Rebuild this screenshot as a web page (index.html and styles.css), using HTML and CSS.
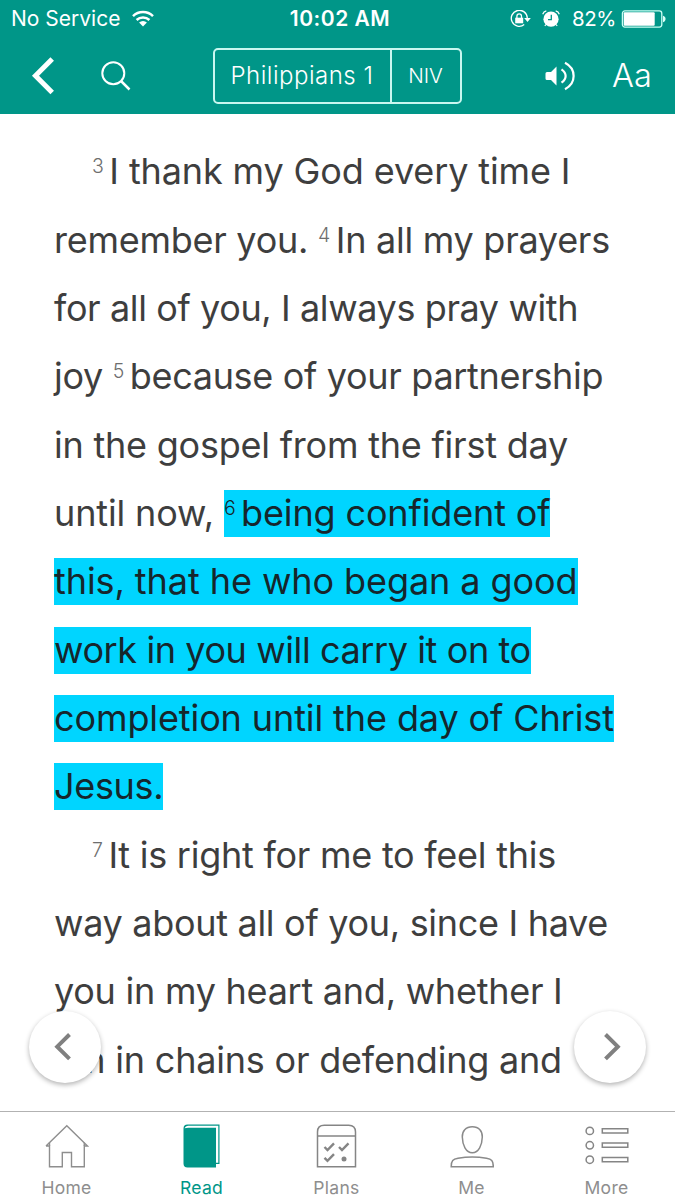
FILE: index.html
```html
<!DOCTYPE html>
<html lang="en">
<head>
<meta charset="utf-8">
<title>Philippians 1</title>
<link rel="stylesheet" href="styles.css">
</head>
<body>
<div class="app">
  <header class="header">
    <div class="status">
      <div class="status-left">
        <span class="carrier">No Service</span>
        <svg class="wifi" width="22" height="17" viewBox="0 0 22 17" fill="none" stroke="#fff" stroke-width="2.5">
          <path d="M1 6.2a14.3 14.3 0 0 1 20 0"/><path d="M4.6 10a9.3 9.3 0 0 1 12.8 0"/><path d="M11 16.4l-3.9-3.9a5.6 5.6 0 0 1 7.8 0z" fill="#fff" stroke="none"/>
        </svg>
      </div>
      <div class="clock">10:02 AM</div>
      <div class="status-right">
        <svg width="21" height="18" viewBox="0 0 21 18" fill="none" stroke="#fff" stroke-width="1.3">
          <path d="M14.2 14.6A8 8 0 1 1 17.3 8"/><path d="M14.2 8h6.6l-3.3 4z" fill="#fff" stroke="none"/>
          <path d="M5.2 7.7h8v5.6h-8z" fill="#fff" stroke="none"/><path d="M6.9 8V6.2a2.3 2.3 0 0 1 4.6 0V8"/>
        </svg>
        <svg class="alarm" width="18" height="18" viewBox="0 0 18 18" fill="none" stroke="#fff" stroke-width="1.2">
          <circle cx="9" cy="9.2" r="7.6" fill="#fff" stroke="none"/><path d="M.7 4.2A5 5 0 0 1 4.300.9M17.300 4.200a5 5 0 0 0-3.600-3.300M4 14.500l-1.200 1.500M14 14.500l1.200 1.500"/><path d="M9.300 4.800v4.800H6" stroke="#009688" stroke-width="1.3"/>
        </svg>
        <span class="percent">82%</span>
        <svg width="45" height="18" viewBox="0 0 45 18" fill="none">
          <rect x="1.400" y=".9" width="39.400" height="16.200" rx="2.500" stroke="#c9fff4" stroke-width="1.300"/><rect x="2.700" y="2.200" width="31" height="13.600" rx="1" fill="#fff"/><path d="M42 5.800c3.400.5 3.400 5.900 0 6.400z" fill="#d9fff8"/>
        </svg>
      </div>
    </div>
    <nav class="toolbar">
      <svg class="back" width="24" height="40" viewBox="0 0 24 40" fill="none" stroke="#fff" stroke-width="5"><path d="M21.200 3L4.500 19.700l16.700 16.700"/></svg>
      <svg class="search" width="30" height="30" viewBox="0 0 30 30" fill="none" stroke="#fff" stroke-width="2"><circle cx="12.300" cy="12.300" r="11"/><path d="M20 20l8.500 8.500" stroke-width="2.500"/></svg>
      <div class="picker"><span class="book">Philippians 1</span><span class="version">NIV</span></div>
      <svg class="sound" width="32" height="30" viewBox="0 0 32 30" fill="none" stroke="#fff" stroke-width="2.200">
        <path d="M2 11h4l5.500-5.500v19L6 19H2a1.500 1.500 0 0 1-1.500-1.500v-5A1.500 1.500 0 0 1 2 11z" fill="#fff" stroke="none"/><path d="M16.500 8.300c5.500 3.800 5.500 9.600 0 13.400"/><path d="M20 1.800c11.500 6 11.500 20.400 0 26.400"/>
      </svg>
      <span class="type">Aa</span>
    </nav>
  </header>
  <main class="reader">
    <p class="verse">
      <span class="line indent l1"><sup>3</sup>I thank my God every time I</span>
      <span class="line l2">remember you. <sup>4</sup>In all my prayers</span>
      <span class="line l3">for all of you, I always pray with</span>
      <span class="line l4">joy <sup>5</sup>because of your partnership</span>
      <span class="line l5">in the gospel from the first day</span>
      <span class="line l6">until now, <mark><sup>6</sup>being confident of</mark></span>
      <span class="line l7"><mark>this, that he who began a good</mark></span>
      <span class="line l8"><mark>work in you will carry it on to</mark></span>
      <span class="line l9"><mark>completion until the day of Christ</mark></span>
      <span class="line l10"><mark>Jesus.</mark></span>
    </p>
    <p class="verse">
      <span class="line indent l11"><sup>7</sup>It is right for me to feel this</span>
      <span class="line l12">way about all of you, since I have</span>
      <span class="line l13">you in my heart and, whether I</span>
      <span class="line l14">am in chains or defending and</span>
    </p>
    <div class="round prev"><svg width="18" height="28" viewBox="0 0 18 28" fill="none" stroke="#808080" stroke-width="4"><path d="M15.500 1.500L3.200 13.700l12.300 12.200"/></svg></div>
    <div class="round next"><svg width="18" height="28" viewBox="0 0 18 28" fill="none" stroke="#808080" stroke-width="4"><path d="M2.500 1.500L14.800 13.700 2.500 25.900"/></svg></div>
  </main>
  <footer class="tabs">
    <div class="tab"><svg width="44" height="46" viewBox="0 0 44 46" fill="none" stroke="#8e8e8e" stroke-width="1.400"><path d="M1 22L21.800 1.700 42.500 22h-3.200v20.800H26.500V28.500H17.300v14.300H4.500V22H1"/><path d="M4.500 22v-3.500M39.300 22v-3.500"/></svg><span>Home</span></div>
    <div class="tab active"><svg width="44" height="46" viewBox="0 0 44 46"><path d="M7.500 .5h32v39.500h-3.500V43.500H7.500a4 4 0 0 1-4-4V4.500a4 4 0 0 1 4-4z" fill="#009688"/><path d="M4.500 4.300Q5.500 1.700 8 1.700h30.300v37.100h-2.300V3.700H8.500Q6 3.700 4.500 4.300z" fill="#fff"/></svg><span>Read</span></div>
    <div class="tab"><svg width="44" height="46" viewBox="0 0 44 46" fill="none" stroke="#858585" stroke-width="1.500"><path d="M2.500 42.800V8q0-6.800 6.800-6.800h24.400q6.800 0 6.800 6.800v34.800zM2.500 12h38"/><path d="M9.500 23l3 3 6.500-6.600M24 23l3 3 6.500-6.600M9.500 33.800l3 3 6.500-6.600" stroke-width="2.400"/><circle cx="29" cy="34.900" r="2.500" fill="#858585" stroke="none"/></svg><span>Plans</span></div>
    <div class="tab"><svg width="44" height="46" viewBox="0 0 44 46" fill="none" stroke="#8a8a8a" stroke-width="1.500"><path d="M22.300 2.800c6.700 0 10.200 4.500 10 10.200-.2 8-3.500 15.700-10 15.700S12.500 21 12.300 13c-.2-5.700 3.300-10.200 10-10.200z"/><path d="M1.200 42.800C1.200 36.500 3 35.200 8 34.300c9-1.500 19.500-1.500 28.500 0 5 .9 6.800 2.200 6.800 8.500z"/></svg><span>Me</span></div>
    <div class="tab"><svg width="44" height="46" viewBox="0 0 44 46" fill="none" stroke="#858585" stroke-width="1.500"><circle cx="4.800" cy="6.900" r="3.700"/><circle cx="4.800" cy="21.300" r="3.700"/><circle cx="4.800" cy="35.700" r="3.700"/><path d="M17.300 4.700h25.500v4.200H17.300zM17.300 19.100h25.500v4.200H17.300zM17.300 33.500h25.500v4.200H17.300z"/></svg><span>More</span></div>
  </footer>
</div>
</body>
</html>
```
FILE: styles.css
```css
* { box-sizing: border-box; }
body { margin: 0; font-family: Inter, "Liberation Sans", sans-serif; background: #fff; }
svg { display: block; flex: none; }
.app { width: 675px; height: 1200px; display: flex; flex-direction: column; overflow: hidden; }
.header { height: 114px; flex: none; background: #009688; color: #fff; }
.status { height: 37px; display: grid; grid-template-columns: 1fr auto 1fr; align-items: center; padding: 0 9px 0 11px; font-size: 21px; }
.status-left, .status-right { display: flex; align-items: center; }
.status-left { gap: 12px; }
.status-right { justify-content: flex-end; }
.carrier { letter-spacing: 0; }
.clock { font-weight: 600; letter-spacing: .5px; padding-left: 3px; }
.alarm { margin: 0 12px 0 11px; }
.percent { margin-right: 5px; letter-spacing: -.4px; font-size: 20.5px; }
.toolbar { height: 77px; display: flex; align-items: center; padding-left: 31px; }
.search { margin-left: 46px; }
.picker { margin-left: 82px; width: 249px; height: 56px; border: 2px solid #c9f7f0; border-radius: 5px; display: flex; }
.book, .version { display: flex; align-items: center; justify-content: center; }
.book { width: 177px; border-right: 2px solid #c9f7f0; font-size: 24px; font-weight: 350; letter-spacing: .5px; padding-right: 1px; }
.version { flex: 1; font-size: 20.5px; font-weight: 350; padding-right: 1px; }
.sound { margin-left: 83px; }
.type { margin-left: 35px; font-size: 32.5px; font-weight: 350; }
.reader { position: relative; flex: 1; overflow: hidden; padding: 23.2px 54px 0; color: #3e3e3e; font-size: 36px; line-height: 68.35px; }
.verse { margin: 0; }
.line { display: block; white-space: nowrap; }
.indent { padding-left: 38px; }
.l1 { letter-spacing: -.12px; }
.l2 { letter-spacing: -.26px; }
.l3 { letter-spacing: -.39px; }
.l4 { letter-spacing: -.32px; }
.l5 { letter-spacing: -.22px; }
.l6 { letter-spacing: -.14px; }
.l7 { letter-spacing: -.07px; }
.l8 { letter-spacing: -.4px; }
.l9 { letter-spacing: -.1px; }
.l10 { letter-spacing: -.33px; }
.l11 { letter-spacing: -.25px; }
.l12 { letter-spacing: -.3px; }
.l13 { letter-spacing: -.25px; }
.l14 { letter-spacing: -.2px; }
sup { font-size: 19.5px; line-height: 0; font-weight: 350; vertical-align: 11px; margin-right: 5.5px; letter-spacing: 0; color: #6e6e6e; }
mark { background: #00d5ff; color: #16262c; padding: 1px 0 2px; }
mark sup { color: #16262c; }
.round { position: absolute; top: 897px; width: 72px; height: 72px; border-radius: 50%; background: #fff; box-shadow: 0 2px 5px rgba(0,0,0,.3); display: flex; align-items: center; justify-content: center; }
.prev { left: 29px; padding-right: 5px; }
.next { right: 29px; padding-left: 4px; }
.tabs { height: 89px; flex: none; border-top: 1px solid #b2b2b2; display: grid; grid-template-columns: repeat(5, 135px); background: #fff; }
.tab { display: flex; flex-direction: column; align-items: center; padding-top: 12px; padding-right: 2px; color: #8e8e8e; font-size: 17.5px; line-height: 24px; letter-spacing: .3px; }
.tab span { margin-top: 6px; }
.active { color: #009688; }
```
